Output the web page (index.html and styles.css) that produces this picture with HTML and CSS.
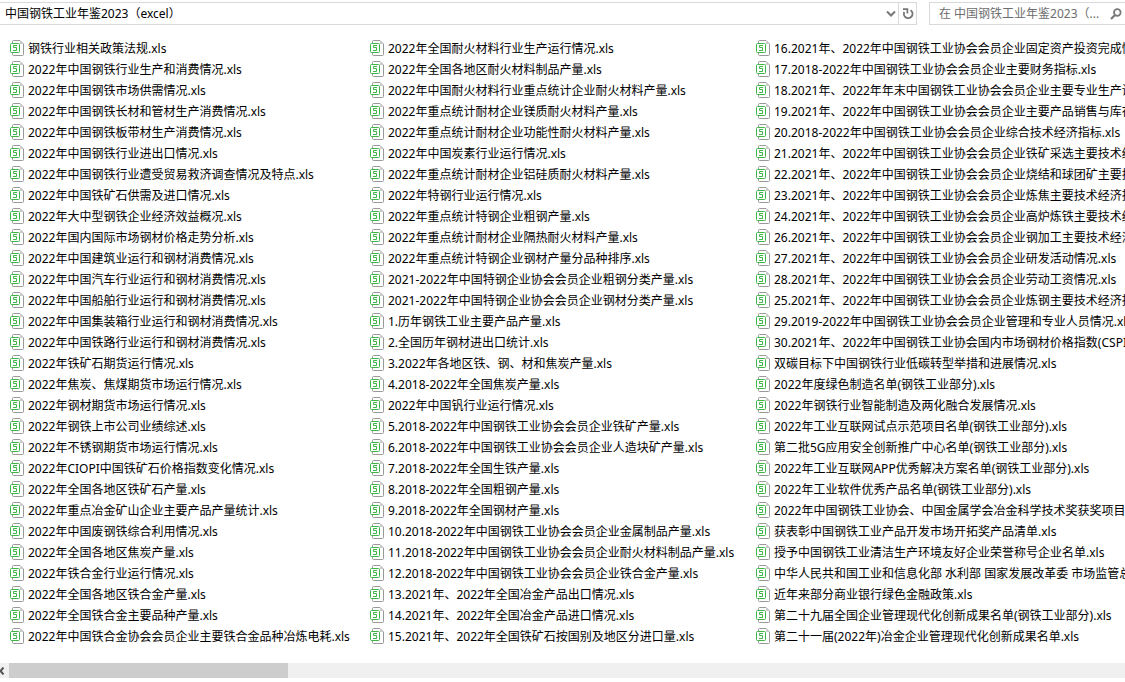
FILE: index.html
```html
<!DOCTYPE html>
<html lang="zh-CN">
<head>
<meta charset="utf-8">
<title>中国钢铁工业年鉴2023（excel）</title>
<link rel="stylesheet" href="styles.css">
</head>
<body>
<svg class="sprite" aria-hidden="true">
  <symbol id="xls" viewBox="0 0 14 16">
    <path d="M2.5 3V1.5q0-1 1-1H10L13.5 4v10.5q0 1-1 1h-9q-1 0-1-1V13" fill="#fff" stroke="#999"/>
    <path d="M10 1V4h3z" fill="#ccc"/>
    <rect x=".5" y="3.5" width="9" height="9" rx="1" fill="#fff" stroke="#3fb548"/>
    <path d="M7 5.5H3.500V7.500H6.500V10.500H3" fill="none" stroke="#3fb548"/>
  </symbol>
</svg>
<header class="toolbar">
  <div class="address">
    <input class="field" type="text" aria-label="地址" value="中国钢铁工业年鉴2023（excel）">
    <button class="tool recent" type="button" aria-label="上一个位置"><svg width="10" height="8" viewBox="0 0 10 8"><path d="M1 1.500l4 4 4-4" fill="none" stroke="#777" stroke-width="2"/></svg></button>
    <button class="tool refresh" type="button" aria-label="刷新"><svg width="12" height="12" viewBox="0 0 12 12"><path d="M8.500 2.200A4.300 4.300 0 1 1 2.300 4" fill="none" stroke="#777" stroke-width="1.900"/><path d="M1 1.200h4.400v4.400" fill="none" stroke="#777" stroke-width="1.700"/></svg></button>
  </div>
  <div class="search">
    <input class="field" type="text" aria-label="搜索" placeholder="在 中国钢铁工业年鉴2023（...">
    <button class="tool" type="button" aria-label="开始搜索"><svg width="12" height="12" viewBox="0 0 12 12"><circle cx="7.300" cy="4.500" r="3.300" fill="none" stroke="#777" stroke-width="1.800"/><path d="M5 7L1 11" stroke="#777" stroke-width="2.200"/></svg></button>
  </div>
</header>
<main class="pane">
<ul class="files">
<li><a href="#"><svg><use href="#xls"/></svg>钢铁行业相关政策法规.xls</a></li>
<li><a href="#"><svg><use href="#xls"/></svg>2022年中国钢铁行业生产和消费情况.xls</a></li>
<li><a href="#"><svg><use href="#xls"/></svg>2022年中国钢铁市场供需情况.xls</a></li>
<li><a href="#"><svg><use href="#xls"/></svg>2022年中国钢铁长材和管材生产消费情况.xls</a></li>
<li><a href="#"><svg><use href="#xls"/></svg>2022年中国钢铁板带材生产消费情况.xls</a></li>
<li><a href="#"><svg><use href="#xls"/></svg>2022年中国钢铁行业进出口情况.xls</a></li>
<li><a href="#"><svg><use href="#xls"/></svg>2022年中国钢铁行业遭受贸易救济调查情况及特点.xls</a></li>
<li><a href="#"><svg><use href="#xls"/></svg>2022年中国铁矿石供需及进口情况.xls</a></li>
<li><a href="#"><svg><use href="#xls"/></svg>2022年大中型钢铁企业经济效益概况.xls</a></li>
<li><a href="#"><svg><use href="#xls"/></svg>2022年国内国际市场钢材价格走势分析.xls</a></li>
<li><a href="#"><svg><use href="#xls"/></svg>2022年中国建筑业运行和钢材消费情况.xls</a></li>
<li><a href="#"><svg><use href="#xls"/></svg>2022年中国汽车行业运行和钢材消费情况.xls</a></li>
<li><a href="#"><svg><use href="#xls"/></svg>2022年中国船舶行业运行和钢材消费情况.xls</a></li>
<li><a href="#"><svg><use href="#xls"/></svg>2022年中国集装箱行业运行和钢材消费情况.xls</a></li>
<li><a href="#"><svg><use href="#xls"/></svg>2022年中国铁路行业运行和钢材消费情况.xls</a></li>
<li><a href="#"><svg><use href="#xls"/></svg>2022年铁矿石期货运行情况.xls</a></li>
<li><a href="#"><svg><use href="#xls"/></svg>2022年焦炭、焦煤期货市场运行情况.xls</a></li>
<li><a href="#"><svg><use href="#xls"/></svg>2022年钢材期货市场运行情况.xls</a></li>
<li><a href="#"><svg><use href="#xls"/></svg>2022年钢铁上市公司业绩综述.xls</a></li>
<li><a href="#"><svg><use href="#xls"/></svg>2022年不锈钢期货市场运行情况.xls</a></li>
<li><a href="#"><svg><use href="#xls"/></svg>2022年CIOPI中国铁矿石价格指数变化情况.xls</a></li>
<li><a href="#"><svg><use href="#xls"/></svg>2022年全国各地区铁矿石产量.xls</a></li>
<li><a href="#"><svg><use href="#xls"/></svg>2022年重点冶金矿山企业主要产品产量统计.xls</a></li>
<li><a href="#"><svg><use href="#xls"/></svg>2022年中国废钢铁综合利用情况.xls</a></li>
<li><a href="#"><svg><use href="#xls"/></svg>2022年全国各地区焦炭产量.xls</a></li>
<li><a href="#"><svg><use href="#xls"/></svg>2022年铁合金行业运行情况.xls</a></li>
<li><a href="#"><svg><use href="#xls"/></svg>2022年全国各地区铁合金产量.xls</a></li>
<li><a href="#"><svg><use href="#xls"/></svg>2022年全国铁合金主要品种产量.xls</a></li>
<li><a href="#"><svg><use href="#xls"/></svg>2022年中国铁合金协会会员企业主要铁合金品种冶炼电耗.xls</a></li>
<li><a href="#"><svg><use href="#xls"/></svg>2022年全国耐火材料行业生产运行情况.xls</a></li>
<li><a href="#"><svg><use href="#xls"/></svg>2022年全国各地区耐火材料制品产量.xls</a></li>
<li><a href="#"><svg><use href="#xls"/></svg>2022年中国耐火材料行业重点统计企业耐火材料产量.xls</a></li>
<li><a href="#"><svg><use href="#xls"/></svg>2022年重点统计耐材企业镁质耐火材料产量.xls</a></li>
<li><a href="#"><svg><use href="#xls"/></svg>2022年重点统计耐材企业功能性耐火材料产量.xls</a></li>
<li><a href="#"><svg><use href="#xls"/></svg>2022年中国炭素行业运行情况.xls</a></li>
<li><a href="#"><svg><use href="#xls"/></svg>2022年重点统计耐材企业铝硅质耐火材料产量.xls</a></li>
<li><a href="#"><svg><use href="#xls"/></svg>2022年特钢行业运行情况.xls</a></li>
<li><a href="#"><svg><use href="#xls"/></svg>2022年重点统计特钢企业粗钢产量.xls</a></li>
<li><a href="#"><svg><use href="#xls"/></svg>2022年重点统计耐材企业隔热耐火材料产量.xls</a></li>
<li><a href="#"><svg><use href="#xls"/></svg>2022年重点统计特钢企业钢材产量分品种排序.xls</a></li>
<li><a href="#"><svg><use href="#xls"/></svg>2021-2022年中国特钢企业协会会员企业粗钢分类产量.xls</a></li>
<li><a href="#"><svg><use href="#xls"/></svg>2021-2022年中国特钢企业协会会员企业钢材分类产量.xls</a></li>
<li><a href="#"><svg><use href="#xls"/></svg>1.历年钢铁工业主要产品产量.xls</a></li>
<li><a href="#"><svg><use href="#xls"/></svg>2.全国历年钢材进出口统计.xls</a></li>
<li><a href="#"><svg><use href="#xls"/></svg>3.2022年各地区铁、钢、材和焦炭产量.xls</a></li>
<li><a href="#"><svg><use href="#xls"/></svg>4.2018-2022年全国焦炭产量.xls</a></li>
<li><a href="#"><svg><use href="#xls"/></svg>2022年中国钒行业运行情况.xls</a></li>
<li><a href="#"><svg><use href="#xls"/></svg>5.2018-2022年中国钢铁工业协会会员企业铁矿产量.xls</a></li>
<li><a href="#"><svg><use href="#xls"/></svg>6.2018-2022年中国钢铁工业协会会员企业人造块矿产量.xls</a></li>
<li><a href="#"><svg><use href="#xls"/></svg>7.2018-2022年全国生铁产量.xls</a></li>
<li><a href="#"><svg><use href="#xls"/></svg>8.2018-2022年全国粗钢产量.xls</a></li>
<li><a href="#"><svg><use href="#xls"/></svg>9.2018-2022年全国钢材产量.xls</a></li>
<li><a href="#"><svg><use href="#xls"/></svg>10.2018-2022年中国钢铁工业协会会员企业金属制品产量.xls</a></li>
<li><a href="#"><svg><use href="#xls"/></svg>11.2018-2022年中国钢铁工业协会会员企业耐火材料制品产量.xls</a></li>
<li><a href="#"><svg><use href="#xls"/></svg>12.2018-2022年中国钢铁工业协会会员企业铁合金产量.xls</a></li>
<li><a href="#"><svg><use href="#xls"/></svg>13.2021年、2022年全国冶金产品出口情况.xls</a></li>
<li><a href="#"><svg><use href="#xls"/></svg>14.2021年、2022年全国冶金产品进口情况.xls</a></li>
<li><a href="#"><svg><use href="#xls"/></svg>15.2021年、2022年全国铁矿石按国别及地区分进口量.xls</a></li>
<li><a href="#"><svg><use href="#xls"/></svg>16.2021年、2022年中国钢铁工业协会会员企业固定资产投资完成情况.xls</a></li>
<li><a href="#"><svg><use href="#xls"/></svg>17.2018-2022年中国钢铁工业协会会员企业主要财务指标.xls</a></li>
<li><a href="#"><svg><use href="#xls"/></svg>18.2021年、2022年年末中国钢铁工业协会会员企业主要专业生产设备.xls</a></li>
<li><a href="#"><svg><use href="#xls"/></svg>19.2021年、2022年中国钢铁工业协会会员企业主要产品销售与库存.xls</a></li>
<li><a href="#"><svg><use href="#xls"/></svg>20.2018-2022年中国钢铁工业协会会员企业综合技术经济指标.xls</a></li>
<li><a href="#"><svg><use href="#xls"/></svg>21.2021年、2022年中国钢铁工业协会会员企业铁矿采选主要技术经济指标.xls</a></li>
<li><a href="#"><svg><use href="#xls"/></svg>22.2021年、2022年中国钢铁工业协会会员企业烧结和球团矿主要技术经济指标.xls</a></li>
<li><a href="#"><svg><use href="#xls"/></svg>23.2021年、2022年中国钢铁工业协会会员企业炼焦主要技术经济指标.xls</a></li>
<li><a href="#"><svg><use href="#xls"/></svg>24.2021年、2022年中国钢铁工业协会会员企业高炉炼铁主要技术经济指标.xls</a></li>
<li><a href="#"><svg><use href="#xls"/></svg>26.2021年、2022年中国钢铁工业协会会员企业钢加工主要技术经济指标.xls</a></li>
<li><a href="#"><svg><use href="#xls"/></svg>27.2021年、2022年中国钢铁工业协会会员企业研发活动情况.xls</a></li>
<li><a href="#"><svg><use href="#xls"/></svg>28.2021年、2022年中国钢铁工业协会会员企业劳动工资情况.xls</a></li>
<li><a href="#"><svg><use href="#xls"/></svg>25.2021年、2022年中国钢铁工业协会会员企业炼钢主要技术经济指标.xls</a></li>
<li><a href="#"><svg><use href="#xls"/></svg>29.2019-2022年中国钢铁工业协会会员企业管理和专业人员情况.xls</a></li>
<li><a href="#"><svg><use href="#xls"/></svg>30.2021年、2022年中国钢铁工业协会国内市场钢材价格指数(CSPI).xls</a></li>
<li><a href="#"><svg><use href="#xls"/></svg>双碳目标下中国钢铁行业低碳转型举措和进展情况.xls</a></li>
<li><a href="#"><svg><use href="#xls"/></svg>2022年度绿色制造名单(钢铁工业部分).xls</a></li>
<li><a href="#"><svg><use href="#xls"/></svg>2022年钢铁行业智能制造及两化融合发展情况.xls</a></li>
<li><a href="#"><svg><use href="#xls"/></svg>2022年工业互联网试点示范项目名单(钢铁工业部分).xls</a></li>
<li><a href="#"><svg><use href="#xls"/></svg>第二批5G应用安全创新推广中心名单(钢铁工业部分).xls</a></li>
<li><a href="#"><svg><use href="#xls"/></svg>2022年工业互联网APP优秀解决方案名单(钢铁工业部分).xls</a></li>
<li><a href="#"><svg><use href="#xls"/></svg>2022年工业软件优秀产品名单(钢铁工业部分).xls</a></li>
<li><a href="#"><svg><use href="#xls"/></svg>2022年中国钢铁工业协会、中国金属学会冶金科学技术奖获奖项目.xls</a></li>
<li><a href="#"><svg><use href="#xls"/></svg>获表彰中国钢铁工业产品开发市场开拓奖产品清单.xls</a></li>
<li><a href="#"><svg><use href="#xls"/></svg>授予中国钢铁工业清洁生产环境友好企业荣誉称号企业名单.xls</a></li>
<li><a href="#"><svg><use href="#xls"/></svg>中华人民共和国工业和信息化部 水利部 国家发展改革委 市场监管总局.xls</a></li>
<li><a href="#"><svg><use href="#xls"/></svg>近年来部分商业银行绿色金融政策.xls</a></li>
<li><a href="#"><svg><use href="#xls"/></svg>第二十九届全国企业管理现代化创新成果名单(钢铁工业部分).xls</a></li>
<li><a href="#"><svg><use href="#xls"/></svg>第二十一届(2022年)冶金企业管理现代化创新成果名单.xls</a></li>
</ul>
</main>
<div class="scrollbar">
  <button class="scroll-left" type="button" aria-label="向左滚动"><svg width="5" height="8" viewBox="0 0 5 8"><path d="M3.500 .5L.5 4l3 3.500" fill="none" stroke="#555" stroke-width="2"/></svg></button>
  <div class="track"><div class="thumb"></div></div>
</div>
</body>
</html>
```
FILE: styles.css
```css
* {
  box-sizing: border-box;
}

body {
  margin: 0;
  background: #fff;
  color: #000;
  font: 12px/21px "Noto Sans", "Noto Sans CJK SC", sans-serif;
  overflow: hidden;
}

.sprite {
  display: none;
}

.toolbar {
  display: flex;
  gap: 12px;
  padding-top: 2px;
}

.address,
.search {
  display: flex;
  height: 23px;
  border: 1px solid #d9d9d9;
}

.address {
  flex: 1;
  border-left: 0;
}

.search {
  width: 196px;
  border-right: 0;
}

.field {
  flex: 1;
  min-width: 0;
  border: 0;
  padding: 0 0 0 5px;
  background: transparent;
  color: #000;
  font: inherit;
  outline: 0;
}

.search .field {
  padding-left: 9px;
}

.field::placeholder {
  color: #6d6d6d;
  opacity: 1;
}

.tool {
  display: flex;
  align-items: center;
  justify-content: center;
  width: 18px;
  padding: 0;
  border: 0;
  background: none;
}

.recent {
  width: 14px;
}

.refresh {
  border-left: 1px solid #d9d9d9;
}

.pane {
  padding: 13px 0 0 10px;
  overflow: hidden;
}

.files {
  display: grid;
  grid-auto-flow: column;
  grid-template-rows: repeat(29, 21px);
  grid-template-columns: 360px 386px max-content;
  margin: 0;
  padding: 0;
  list-style: none;
}

.files a {
  display: flex;
  align-items: center;
  gap: 4px;
  color: inherit;
  text-decoration: none;
  white-space: nowrap;
}

.files svg {
  width: 14px;
  height: 16px;
  margin-bottom: 1px;
}

.scrollbar {
  display: flex;
  height: 15px;
  margin-top: 16px;
  background: #f0f0f0;
}

.scroll-left {
  display: flex;
  align-items: center;
  width: 9px;
  padding: 0;
  border: 0;
  background: none;
}

.track {
  flex: 1;
}

.thumb {
  width: 25%;
  height: 100%;
  background: #cdcdcd;
}
```
